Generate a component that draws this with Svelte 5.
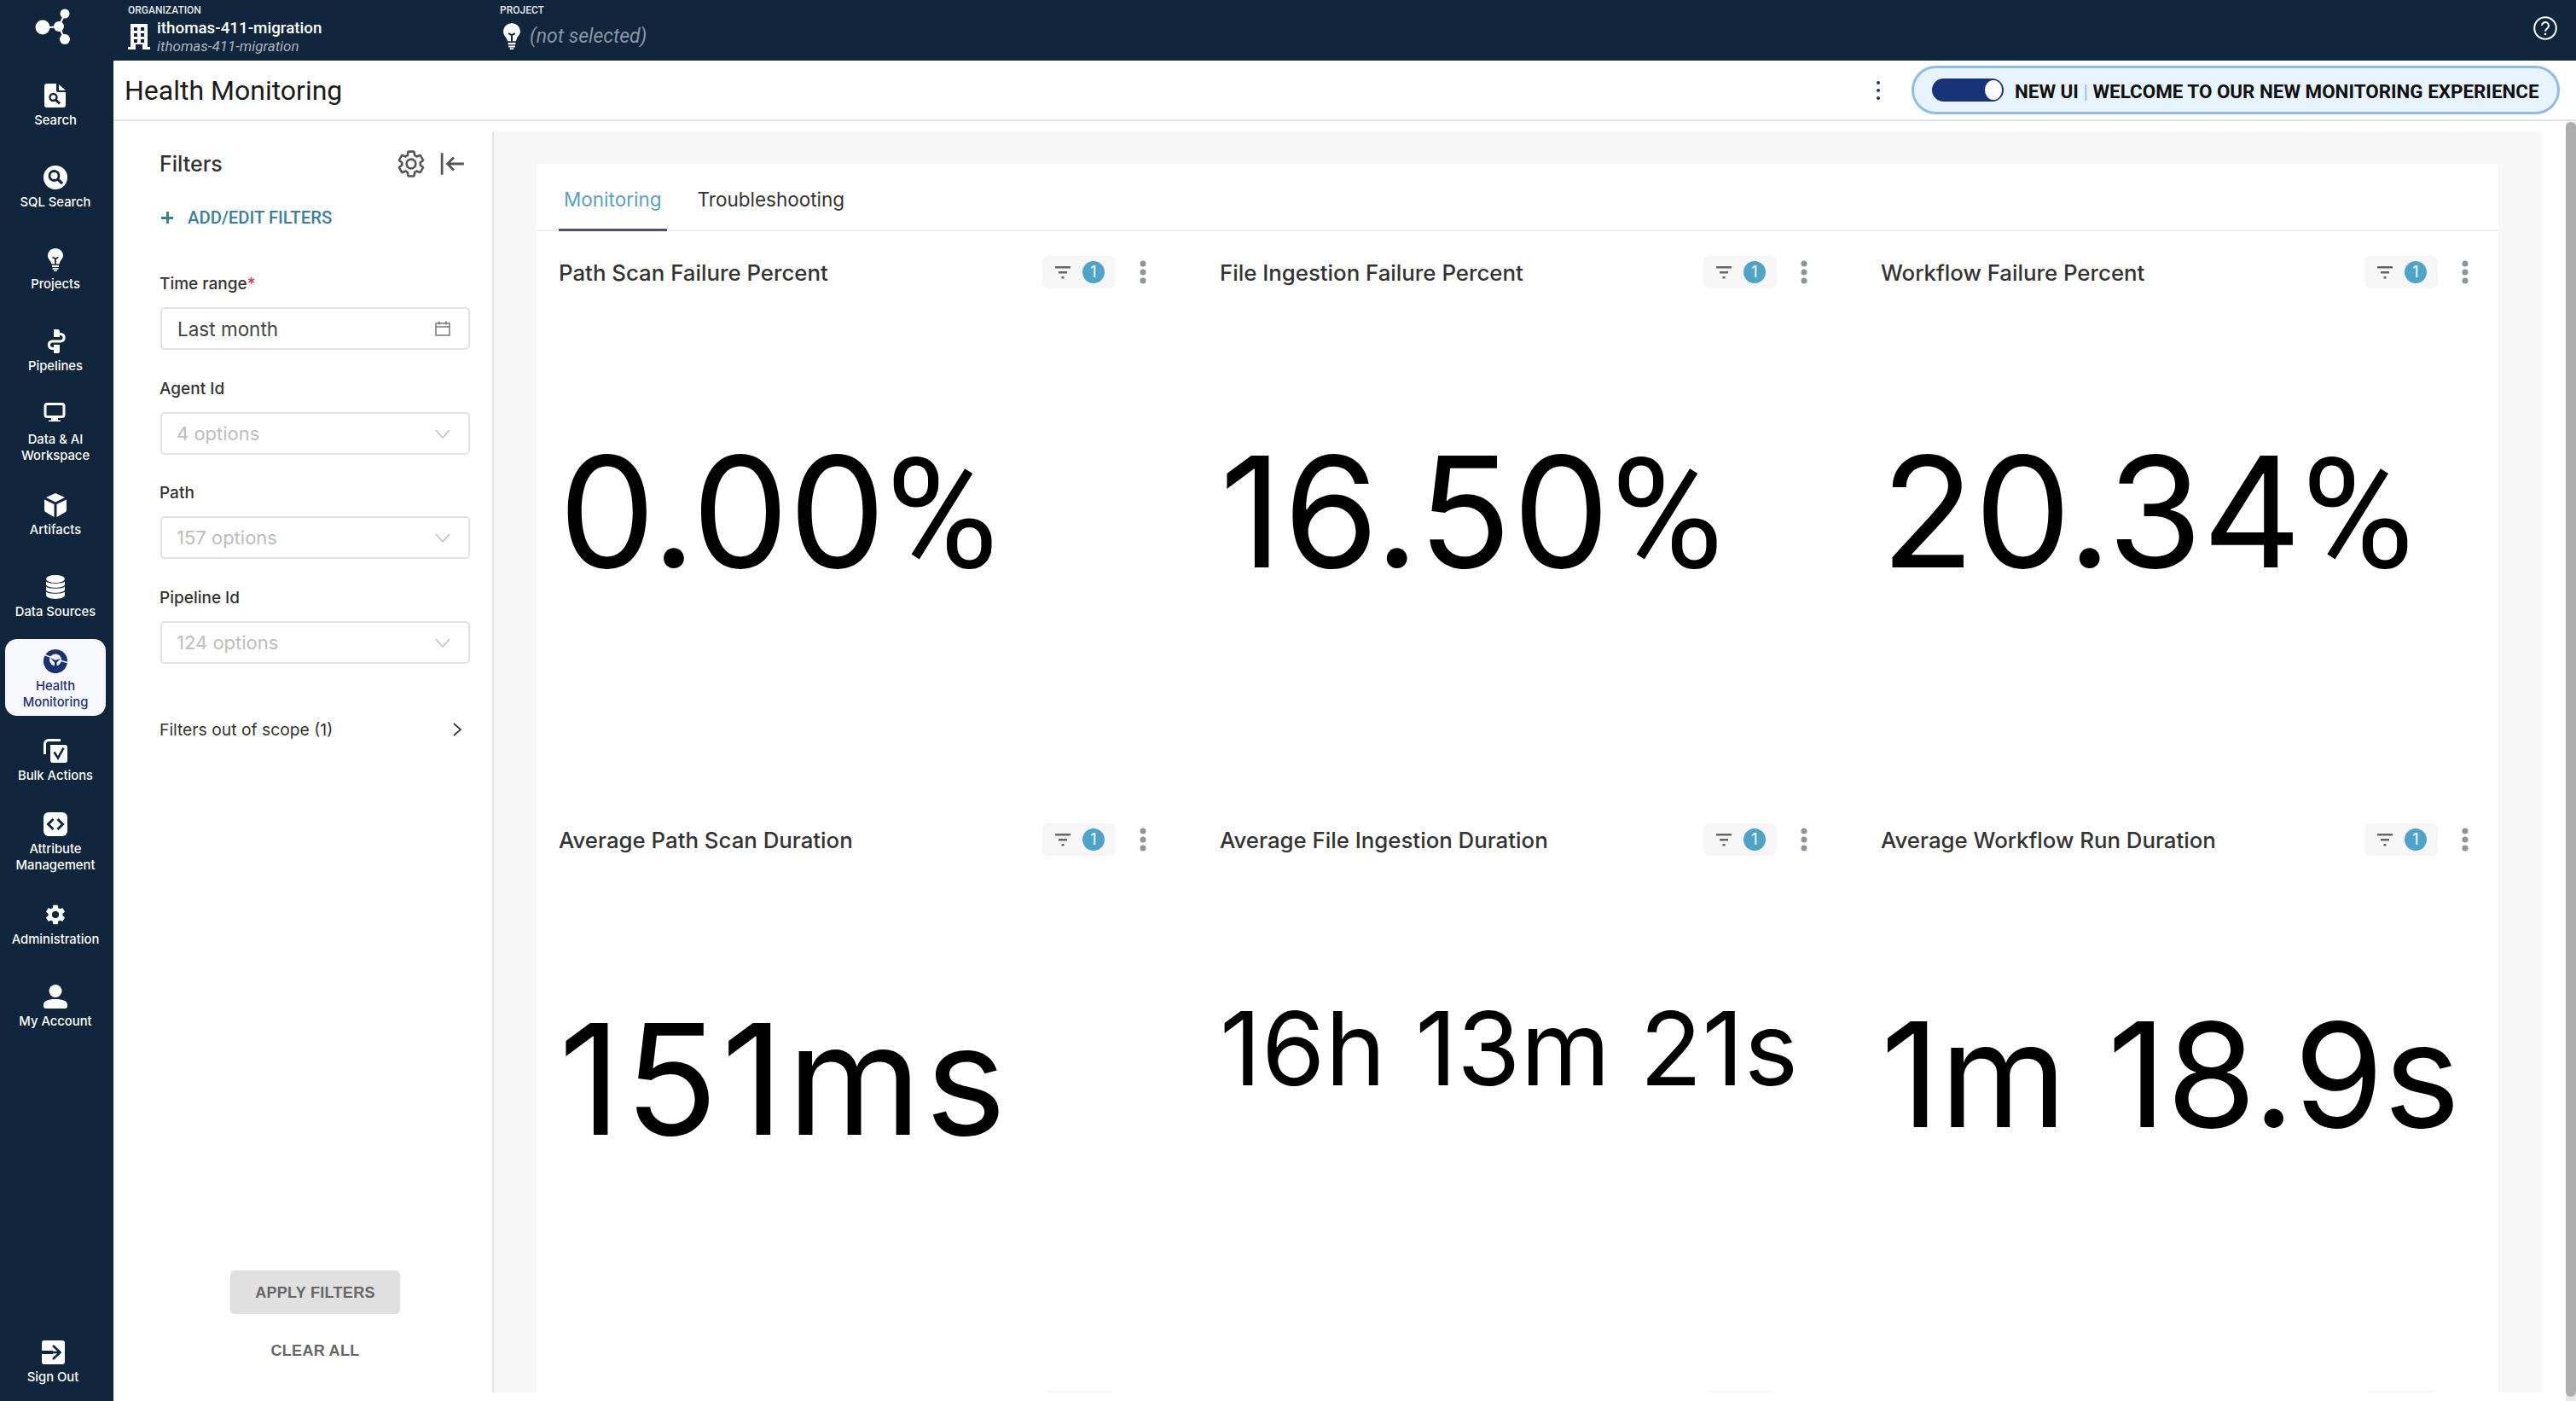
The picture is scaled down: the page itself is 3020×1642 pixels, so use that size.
<script>
  const navItems = [
    { label: 'Search', icon: 'search' },
    { label: 'SQL Search', icon: 'sql' },
    { label: 'Projects', icon: 'bulb' },
    { label: 'Pipelines', icon: 'pipelines' },
    { label: 'Data & AI Workspace', icon: 'monitor', wrap: true },
    { label: 'Artifacts', icon: 'box' },
    { label: 'Data Sources', icon: 'db' },
    { label: 'Health Monitoring', icon: 'health', active: true, wrap: true },
    { label: 'Bulk Actions', icon: 'bulk' },
    { label: 'Attribute Management', icon: 'attr', wrap: true },
    { label: 'Administration', icon: 'gear' },
    { label: 'My Account', icon: 'user' }
  ];

  const navy = '#11263c';
  const activeBg = '#f7f8fb';
  const gearPath =
    'M19.14 12.94c.04-.3.06-.61.06-.94 0-.32-.02-.64-.07-.94l2.03-1.58c.18-.14.23-.41.12-.61l-1.92-3.32c-.12-.22-.37-.29-.59-.22l-2.39.96c-.5-.38-1.03-.7-1.62-.94l-.36-2.54c-.04-.24-.24-.41-.48-.41h-3.84c-.24 0-.43.17-.47.41l-.36 2.54c-.59.24-1.13.57-1.62.94l-2.39-.96c-.22-.08-.47 0-.59.22L2.74 8.87c-.12.21-.08.47.12.61l2.03 1.58c-.05.3-.09.63-.09.94s.02.64.07.94l-2.03 1.58c-.18.14-.23.41-.12.61l1.92 3.32c.12.22.37.29.59.22l2.39-.96c.5.38 1.03.7 1.62.94l.36 2.54c.05.24.24.41.48.41h3.84c.24 0 .44-.17.47-.41l.36-2.54c.59-.24 1.13-.56 1.62-.94l2.39.96c.22.08.47 0 .59-.22l1.92-3.32c.12-.22.07-.47-.12-.61l-2.01-1.58zM12 15.6c-1.98 0-3.6-1.62-3.6-3.6s1.62-3.6 3.6-3.6 3.6 1.62 3.6 3.6-1.62 3.6-3.6 3.6z';

  const bulbInner = `<path fill="currentColor" d="M14 1c-5 0-9 3.7-9 8.5 0 3.6 2.3 5.4 3.6 7.6.5.9.8 1.7.9 2.4h9c.1-.7.4-1.5.9-2.4C19.7 14.900 23 13.100 23 9.500 23 4.700 19 1 14 1z"/><path fill="none" stroke="${navy}" stroke-width="1.800" d="M10.500 11.500l3.500 1.800 3.500-1.800M14 13v6.500"/><path fill="currentColor" d="M10 21h8v2h-8zM10.500 24h7v1.800h-7zM12 26.500h4V28h-4z"/>`;

  const icons = {
    search: `<path fill="currentColor" fill-rule="evenodd" d="M4 0h11v8a2 2 0 0 0 2 2h9v15a3 3 0 0 1-3 3H4a3 3 0 0 1-3-3V3a3 3 0 0 1 3-3zM18 1l8 7h-8z"/><circle cx="11.500" cy="16" r="4" fill="none" stroke="${navy}" stroke-width="2.400"/><path stroke="${navy}" stroke-width="3" d="M14.500 19l4.500 4.500"/>`,
    sql: `<circle cx="14" cy="14" r="14" fill="currentColor"/><circle cx="12.500" cy="12" r="5.500" fill="none" stroke="${navy}" stroke-width="2.800"/><path stroke="${navy}" stroke-width="3.200" d="M16.500 16l5.500 5"/>`,
    bulb: bulbInner,
    pipelines: `<path fill="currentColor" d="M12 0h4.500a2.500 2.500 0 0 1 2.500 2.500V9h-7zM12 18h7v7.500a2.500 2.500 0 0 1-2.500 2.500H12z"/><path fill="none" stroke="currentColor" stroke-width="3" d="M18 5.500h2.500a4.300 4.300 0 0 1 0 8.500H10a4.300 4.300 0 0 0 0 8.500h3"/>`,
    monitor: `<rect x="2" y="1.500" width="22" height="15" rx="2.500" fill="none" stroke="currentColor" stroke-width="3"/><path fill="currentColor" d="M9 18h8v2.500h3V22H6v-1.500h3z"/>`,
    box: `<path fill="currentColor" d="M14 0l11 5-11 5.500L3 5zM1 7.500l11.500 5.500V28L3 22.500a3 3 0 0 1-2-2.500zM27 7.500V20a3 3 0 0 1-2 2.500L15.500 28V13z"/>`,
    db: `<ellipse cx="14" cy="4.500" rx="11" ry="4.500" fill="currentColor"/><path fill="currentColor" d="M3 7.500c2 3 20 3 22 0V11c0 5-22 5-22 0zM3 13.500c2 3 20 3 22 0V17c0 5-22 5-22 0zM3 19.500c2 3 20 3 22 0V23c0 6.500-22 6.500-22 0z"/>`,
    health: `<circle cx="14" cy="14" r="14" fill="currentColor"/><path d="M0 6l14 5.500L28 15.500" fill="none" stroke="${activeBg}" stroke-width="1.600"/><circle cx="14" cy="12.500" r="7" fill="${activeBg}"/><path fill="currentColor" d="M12.300 28L13 15.500 8 10l6 2.800 6-1.800-4.500 4.500.7 12.500z"/>`,
    bulk: `<path fill="none" stroke="currentColor" stroke-width="3" d="M20 1.500H6A4.500 4.500 0 0 0 1.500 6v12"/><path fill="currentColor" d="M8 7h17a3 3 0 0 1 3 3v15a3 3 0 0 1-3 3H11a3 3 0 0 1-3-3z"/><path fill="none" stroke="${navy}" stroke-width="2.600" d="M12.500 15.500l4.500 7 6.500-12"/>`,
    attr: `<rect width="28" height="28" rx="6" fill="currentColor"/><path fill="none" stroke="${navy}" stroke-width="3" d="M11.500 8l-6 6 6 6M16.500 8l6 6-6 6"/>`,
    gear: `<g transform="scale(1.167)"><path fill="currentColor" d="${gearPath}"/></g>`,
    user: `<circle cx="14" cy="7.500" r="7.500" fill="currentColor"/><path fill="currentColor" d="M0 24c0-5 5-7 14-7s14 2 14 7v1a3 3 0 0 1-3 3H3a3 3 0 0 1-3-3z"/>`,
    signout: `<path fill="currentColor" d="M4 0h21a3 3 0 0 1 3 3v22a3 3 0 0 1-3 3H4a3 3 0 0 1-3-3v-9h13v-4H1V3a3 3 0 0 1 3-3z"/><path fill="none" stroke="${navy}" stroke-width="2.600" d="M2 14h20M14 6l8.500 8-8.500 8"/>`
  };

  const fields = [
    { label: 'Agent Id', placeholder: '4 options' },
    { label: 'Path', placeholder: '157 options' },
    { label: 'Pipeline Id', placeholder: '124 options' }
  ];

  const metrics = [
    { title: 'Path Scan Failure Percent', value: '0.00', unit: '%', size: 180 },
    { title: 'File Ingestion Failure Percent', value: '16.50', unit: '%', size: 180, tracking: 1.5 },
    { title: 'Workflow Failure Percent', value: '20.34', unit: '%', size: 180 },
    { title: 'Average Path Scan Duration', value: '151ms', size: 180, tracking: 4 },
    { title: 'Average File Ingestion Duration', value: '16h 13m 21s', size: 120, tracking: 0.3 },
    { title: 'Average Workflow Run Duration', value: '1m 18.9s', size: 170 },
    // next row of panels, only the top of their chips shows above the fold
    { title: '', value: '', size: 180 },
    { title: '', value: '', size: 180 },
    { title: '', value: '', size: 180 }
  ];
</script>

<div class="app">
  <nav class="sidebar">
    <svg class="logo" viewBox="0 0 133 76" aria-hidden="true">
      <path d="M50 33L69 31M69 31L76 16M69 31L76 46" stroke="#fff" stroke-width="2" />
      <circle cx="50" cy="32" r="8.500" fill="#fff" />
      <circle cx="69" cy="31" r="6" fill="#fff" />
      <circle cx="76" cy="16" r="5.500" fill="#fff" />
      <circle cx="76" cy="46" r="6" fill="#fff" />
    </svg>

    {#each navItems as item}
      <div class="nav-item">
        <div class="nav-inner" class:active={item.active}>
          <svg class="nav-icon" viewBox="0 0 28 28" aria-hidden="true">{@html icons[item.icon]}</svg>
          <span class="nav-label" class:wrap={item.wrap}>{item.label}</span>
        </div>
      </div>
    {/each}

    <div class="nav-signout">
      <svg class="nav-icon" viewBox="0 0 28 28" aria-hidden="true">{@html icons.signout}</svg>
      <span class="nav-label">Sign Out</span>
    </div>
  </nav>

  <div class="page">
    <header class="topbar">
      <div class="org">
        <span class="crumb">ORGANIZATION</span>
        <div class="org-row">
          <svg class="building" viewBox="0 0 26 30" aria-hidden="true">
            <path fill="#fff" fill-rule="evenodd" d="M3 0h20v27h3v3h-9v-6H9v6H0v-3h3zM7 4v4h4V4zM15 4v4h4V4zM7 11v4h4v-4zM15 11v4h4v-4zM7 18v4h4v-4zM15 18v4h4v-4z" />
          </svg>
          <div class="org-names">
            <span class="org-name">ithomas-411-migration</span>
            <span class="org-sub">ithomas-411-migration</span>
          </div>
        </div>
      </div>
      <div class="project">
        <span class="crumb">PROJECT</span>
        <div class="project-row">
          <svg class="project-bulb" viewBox="4 0 20 28" preserveAspectRatio="none" aria-hidden="true">{@html bulbInner}</svg>
          <span class="not-selected">(not selected)</span>
        </div>
      </div>
      <svg class="help" viewBox="0 0 28 28" aria-hidden="true">
        <circle cx="14" cy="14" r="12.800" fill="none" stroke="#fff" stroke-width="2" />
        <path d="M10 11a4 4 0 1 1 6.300 3.300c-1.500 1-2.300 1.700-2.300 3.400" fill="none" stroke="#fff" stroke-width="2" />
        <circle cx="14" cy="21" r="1.300" fill="#fff" />
      </svg>
    </header>

    <div class="titlebar">
      <h1>Health Monitoring</h1>
      <div class="title-actions">
        <svg class="title-dots" viewBox="0 0 6 24" aria-hidden="true">
          <circle cx="3" cy="3" r="2" /><circle cx="3" cy="12" r="2" /><circle cx="3" cy="21" r="2" />
        </svg>
        <div class="new-ui">
          <span class="toggle"><span class="knob"></span></span>
          <span class="new-ui-text">NEW UI <span class="sep">|</span> WELCOME TO OUR NEW MONITORING EXPERIENCE</span>
        </div>
      </div>
    </div>

    <div class="body">
      <aside class="filters">
        <div class="filters-head">
          <span class="filters-title">Filters</span>
          <svg class="gear" viewBox="0 0 24 24" aria-hidden="true">
            <path d={gearPath} fill="none" stroke="#555" stroke-width="1.700" />
          </svg>
          <svg class="collapse" viewBox="0 0 28 28" aria-hidden="true">
            <path d="M2 2v24M26 14H8M15 7l-7 7 7 7" fill="none" stroke="#555" stroke-width="2.600" />
          </svg>
        </div>

        <div class="add-filters">
          <span class="plus"></span>
          <span>ADD/EDIT FILTERS</span>
        </div>

        <div class="field">
          <span class="field-label">Time range<span class="req">*</span></span>
          <div class="input">
            <span class="input-value">Last month</span>
            <svg class="input-icon" viewBox="0 0 20 20" aria-hidden="true">
              <path d="M2 4h16v14H2zM2 8h16M6 1.500v4M14 1.500v4" fill="none" stroke="#777" stroke-width="1.500" />
            </svg>
          </div>
        </div>

        {#each fields as field}
          <div class="field">
            <span class="field-label">{field.label}</span>
            <div class="input">
              <span class="input-placeholder">{field.placeholder}</span>
              <svg class="input-icon" viewBox="0 0 20 20" aria-hidden="true">
                <path d="M2 6l8 9 8-9" fill="none" stroke="#bbb" stroke-width="1.300" />
              </svg>
            </div>
          </div>
        {/each}

        <div class="out-of-scope">
          <span>Filters out of scope (1)</span>
          <svg class="scope-chevron" viewBox="0 0 14 20" aria-hidden="true">
            <path d="M3 3l8 7-8 7" fill="none" stroke="#333" stroke-width="1.700" />
          </svg>
        </div>

        <div class="filter-actions">
          <button class="apply" type="button">APPLY FILTERS</button>
          <button class="clear" type="button">CLEAR ALL</button>
        </div>
      </aside>

      <main class="main">
        <section class="card">
          <div class="tabs">
            <span class="tab selected">Monitoring</span>
            <span class="tab">Troubleshooting</span>
          </div>

          <div class="metrics">
            {#each metrics as metric}
              <article class="metric">
                <div class="metric-head">
                  <span class="metric-title">{metric.title}</span>
                  <span class="chip">
                    {#if metric.title}
                      <svg class="chip-filter" viewBox="0 0 20 16" aria-hidden="true">
                        <path d="M1 1h18v2.500H1zM5 7h10v2.400H5zM8.500 13h3v2.400h-3z" fill="#666" />
                      </svg>
                      <span class="badge">1</span>
                    {/if}
                  </span>
                  <svg class="metric-dots" viewBox="0 0 8 28" aria-hidden="true">
                    <circle cx="4" cy="4" r="3.500" /><circle cx="4" cy="14" r="3.500" /><circle cx="4" cy="24" r="3.500" />
                  </svg>
                </div>
                <div class="metric-value" style="font-size: {metric.size}px; letter-spacing: {metric.tracking ?? 0}px">
                  {metric.value}{#if metric.unit}<span class="unit">{metric.unit}</span>{/if}
                </div>
              </article>
            {/each}
          </div>
        </section>
      </main>

      <div class="scroll-track"><div class="scroll-thumb"></div></div>
    </div>
  </div>
</div>

<style>
  :global(body) {
    margin: 0;
    background: #fff;
    font-family: Inter, 'Liberation Sans', sans-serif;
  }

  .app {
    display: flex;
    width: 3020px;
    height: 1642px;
    overflow: hidden;
  }

  /* sidebar */
  .sidebar {
    width: 133px;
    flex: none;
    display: flex;
    flex-direction: column;
    background: #11263c;
    color: #fff;
  }

  .logo {
    display: block;
    width: 133px;
    height: 76px;
    flex: none;
  }

  .nav-item {
    height: 96px;
    flex: none;
    display: flex;
    align-items: center;
    justify-content: center;
  }

  .nav-inner {
    width: 118px;
    margin-right: 3px;
    box-sizing: border-box;
    display: flex;
    flex-direction: column;
    align-items: center;
    gap: 6px;
  }

  .nav-inner.active {
    padding: 12px 0 6px;
    margin-bottom: 4px;
    background: #f7f8fb;
    color: #1b3272;
    border-radius: 14px;
  }

  .nav-icon {
    display: block;
    width: 28px;
    height: 28px;
  }

  .nav-label {
    font-size: 14.800px;
    line-height: 19px;
    font-weight: 500;
    text-align: center;
    white-space: nowrap;
  }

  .nav-label.wrap {
    white-space: normal;
    width: 106px;
  }

  .nav-signout {
    margin-top: auto;
    margin-bottom: 18px;
    padding-right: 9px;
    display: flex;
    flex-direction: column;
    align-items: center;
    gap: 6px;
  }

  /* top bar */
  .page {
    flex: 1;
    min-width: 0;
    display: flex;
    flex-direction: column;
  }

  .topbar {
    height: 71px;
    flex: none;
    display: flex;
    background: #11263c;
    color: #fff;
    font-family: Roboto, sans-serif;
    box-sizing: border-box;
    padding: 5px 22px 0 17px;
  }

  .crumb {
    display: block;
    font-size: 12px;
    line-height: 14px;
    font-weight: 500;
    color: #e4e7ec;
  }

  .org {
    width: 436px;
  }

  .org-row {
    display: flex;
    gap: 8px;
    margin-top: 2px;
  }

  .building {
    width: 26px;
    height: 30px;
    margin-top: 7px;
    flex: none;
  }

  .org-names {
    display: flex;
    flex-direction: column;
  }

  .org-name {
    font-size: 18.800px;
    line-height: 24px;
    font-weight: 500;
  }

  .org-sub {
    font-size: 17px;
    line-height: 18px;
    font-style: italic;
    color: #a9b2bd;
  }

  .project-row {
    display: flex;
    align-items: center;
    gap: 10px;
    margin-top: 7px;
    margin-left: 3px;
  }

  .project-bulb {
    width: 22px;
    height: 32px;
    flex: none;
    color: #fff;
  }

  .not-selected {
    font-size: 23px;
    font-style: italic;
    color: #8b96a5;
  }

  .help {
    width: 28px;
    height: 28px;
    margin-left: auto;
    margin-top: 14px;
  }

  /* title row */
  .titlebar {
    height: 71px;
    flex: none;
    box-sizing: border-box;
    border-bottom: 2px solid #e2e2e2;
    display: flex;
    align-items: center;
    justify-content: space-between;
    padding: 0 19px 0 13px;
  }

  h1 {
    margin: 0;
    font-family: Roboto, sans-serif;
    font-size: 32px;
    font-weight: 400;
    color: #1b1b1b;
  }

  .title-actions {
    display: flex;
    align-items: center;
    gap: 36px;
  }

  .title-dots {
    width: 6px;
    height: 24px;
    fill: #1b3272;
  }

  .new-ui {
    width: 760px;
    height: 57px;
    box-sizing: border-box;
    border: 3px solid #8fbde6;
    border-radius: 29px;
    background: #e7f3fd;
    display: flex;
    align-items: center;
    gap: 13px;
    padding-left: 21px;
  }

  .toggle {
    width: 84px;
    height: 27px;
    box-sizing: border-box;
    background: #1a3278;
    border-radius: 14px;
    display: flex;
    justify-content: flex-end;
    align-items: center;
    padding-right: 2px;
  }

  .knob {
    width: 20px;
    height: 23px;
    border-radius: 50%;
    background: #fff;
  }

  .new-ui-text {
    font-family: Roboto, sans-serif;
    font-size: 22.400px;
    font-weight: 700;
    color: #111;
    white-space: nowrap;
    margin-top: 3px;
  }

  .sep {
    color: #8fbde6;
    font-weight: 400;
  }

  /* filter panel */
  .body {
    flex: 1;
    min-height: 0;
    display: flex;
    position: relative;
  }

  .filters {
    width: 444px;
    flex: none;
    box-sizing: border-box;
    padding: 30px 26px 47px 55px;
    display: flex;
    flex-direction: column;
  }

  .filters-head {
    height: 40px;
    display: flex;
    align-items: center;
  }

  .filters-title {
    font-size: 25px;
    font-weight: 500;
    color: #333;
    margin-right: auto;
    margin-left: -1px;
  }

  .gear {
    width: 36px;
    height: 36px;
    margin-right: 16px;
  }

  .collapse {
    width: 30px;
    height: 30px;
    margin-right: 5px;
  }

  .add-filters {
    height: 30px;
    margin-top: 28px;
    margin-bottom: 52px;
    display: flex;
    align-items: center;
    gap: 17px;
    font-family: Roboto, sans-serif;
    font-size: 20.300px;
    font-weight: 500;
    color: #3c7f9d;
  }

  .plus {
    width: 14px;
    height: 14px;
    margin-left: 1px;
    background:
      linear-gradient(#3c7f9d, #3c7f9d) center / 100% 3px no-repeat,
      linear-gradient(#3c7f9d, #3c7f9d) center / 3px 100% no-repeat;
  }

  .field {
    margin-bottom: 34.500px;
    display: flex;
    flex-direction: column;
    gap: 16px;
  }

  .field-label {
    font-size: 19px;
    line-height: 22px;
    font-weight: 500;
    color: #333;
    margin-left: -1px;
  }

  .req {
    color: #c8404f;
  }

  .input {
    height: 50px;
    box-sizing: border-box;
    border: 2px solid #e2e2e2;
    border-radius: 5px;
    display: flex;
    align-items: center;
    justify-content: space-between;
    padding: 0 20px 0 18px;
  }

  .input-value {
    font-size: 22.500px;
    color: #444;
  }

  .input-placeholder {
    font-size: 22px;
    color: #bdbdbd;
    margin-left: -1px;
  }

  .input-icon {
    width: 20px;
    height: 20px;
  }

  .out-of-scope {
    margin-top: 32px;
    height: 22px;
    display: flex;
    align-items: center;
    justify-content: space-between;
    font-size: 19.300px;
    color: #333;
    padding-right: 8px;
    margin-left: -1px;
  }

  .scope-chevron {
    width: 14px;
    height: 20px;
  }

  .filter-actions {
    margin-top: auto;
    display: flex;
    flex-direction: column;
    align-items: center;
    gap: 31px;
  }

  .apply,
  .clear {
    font-family: 'Liberation Sans', sans-serif;
    font-size: 18px;
    font-weight: 700;
    letter-spacing: 0.300px;
    color: #666;
    border: none;
    padding: 0;
  }

  .apply {
    width: 199px;
    height: 51px;
    padding-top: 2px;
    background: #e0e0e0;
    border-radius: 5px;
  }

  .clear {
    height: 24px;
    background: none;
  }

  /* main area */
  .main {
    width: 2403px;
    flex: none;
    box-sizing: border-box;
    margin: 12px 0 10px;
    padding: 38px 51px 0 50px;
    background: #f7f7f7;
    border-left: 2px solid #e5e5e5;
    overflow: hidden;
  }

  .card {
    background: #fff;
    min-height: 100%;
  }

  .tabs {
    height: 79px;
    box-sizing: border-box;
    border-bottom: 2px solid #efefef;
    display: flex;
    padding-left: 26px;
    gap: 30px;
  }

  .tab {
    height: 79px;
    box-sizing: border-box;
    padding: 28px 6px 0;
    font-size: 22.500px;
    line-height: 27px;
    color: #333;
  }

  .tab.selected {
    color: #5a9fbe;
    border-bottom: 3px solid #4a5078;
  }

  .metrics {
    display: grid;
    grid-template-columns: repeat(3, 775px);
    grid-auto-rows: 665px;
    padding-left: 26px;
  }

  .metric {
    padding-top: 29px;
  }

  .metric-head {
    width: 689px;
    height: 38px;
    display: flex;
    align-items: center;
  }

  .metric-title {
    font-size: 25.800px;
    font-weight: 500;
    color: #333;
    margin-right: auto;
    white-space: nowrap;
  }

  .chip {
    width: 86px;
    height: 38px;
    box-sizing: border-box;
    background: #f6f6f6;
    border-radius: 7px;
    display: flex;
    align-items: center;
    gap: 13px;
    padding-left: 14px;
  }

  .chip-filter {
    width: 20px;
    height: 16px;
  }

  .badge {
    width: 26px;
    height: 26px;
    border-radius: 50%;
    background: #4ea3c6;
    color: #fff;
    font-size: 18px;
    line-height: 26px;
    text-align: center;
  }

  .metric-dots {
    width: 8px;
    height: 28px;
    margin-left: 28px;
    fill: #8e9499;
  }

  .metric-value {
    margin-top: 154px;
    color: #000;
    line-height: 1.2;
    white-space: nowrap;
  }

  .unit {
    font-family: Roboto, sans-serif;
  }

  /* scrollbar */
  .scroll-track {
    position: absolute;
    top: 1px;
    right: 0;
    bottom: 0;
    width: 12px;
    background: #e8e8e8;
  }

  .scroll-thumb {
    height: 1494px;
    background: #adadad;
    border-radius: 6px;
  }
</style>
